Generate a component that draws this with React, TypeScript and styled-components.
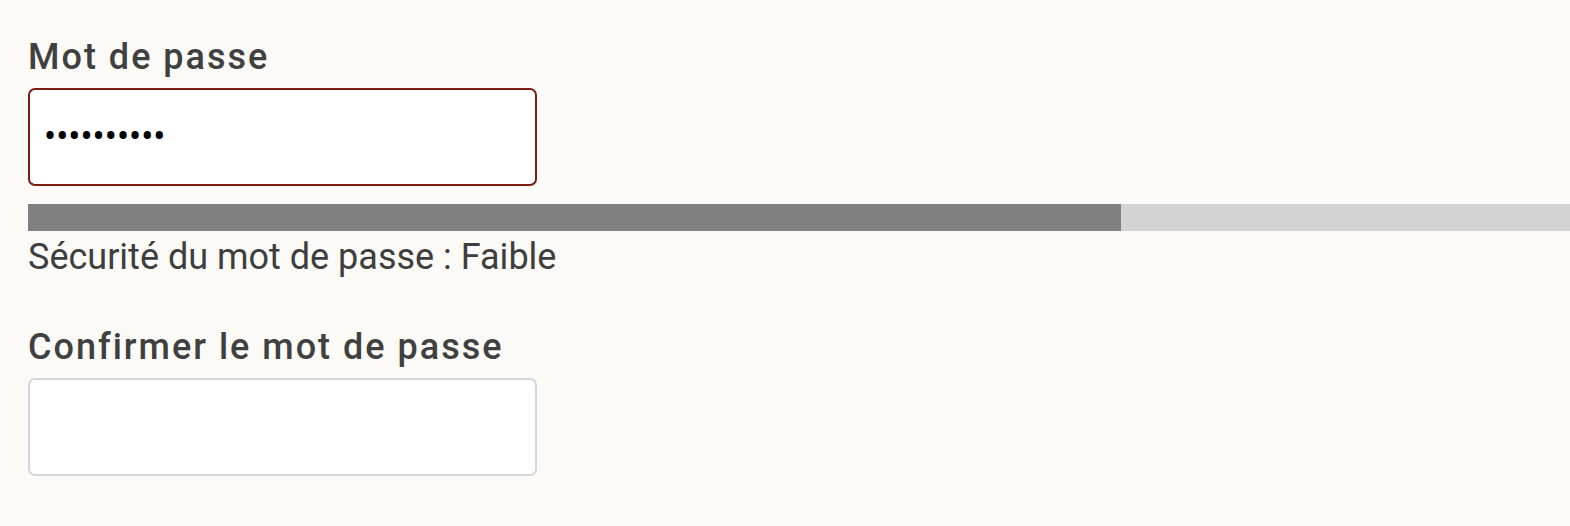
import styled, { createGlobalStyle } from 'styled-components';

const GlobalStyle = createGlobalStyle`
  html, body {
    margin: 0;
    padding: 0;
    background: #fbfaf6;
  }
  body {
    font-family: Roboto, "Liberation Sans", sans-serif;
    color: #3e3e3e;
  }
`;

const strength = 0.709;

export default function App() {
  return (
    <>
      <GlobalStyle />
      <Form>
        <Field>
          <Label htmlFor="password">Mot de passe</Label>
          <Input id="password" type="password" defaultValue="motdepasse" $invalid />
          <Meter>
            <MeterFill style={{ width: `${strength * 100}%` }} />
          </Meter>
          <Hint>Sécurité du mot de passe : Faible</Hint>
        </Field>
        <Field>
          <Label htmlFor="confirm">Confirmer le mot de passe</Label>
          <Input id="confirm" type="password" />
        </Field>
      </Form>
    </>
  );
}

const Form = styled.form`
  display: flex;
  flex-direction: column;
  gap: 47px;
  padding: 36px 0 0 28px;
`;

const Field = styled.div`
  display: flex;
  flex-direction: column;
  align-items: flex-start;
`;

const Label = styled.label`
  font-size: 36px;
  line-height: 43px;
  font-weight: 500;
  letter-spacing: 2px;
  color: #404040;
  margin-bottom: 9px;
`;

const Input = styled.input<{ $invalid?: boolean }>`
  box-sizing: border-box;
  width: 509px;
  height: 98px;
  padding: 0 14px;
  background: #fff;
  border: 2px solid ${p => (p.$invalid ? '#7c1d14' : '#d6d6d6')};
  border-radius: 7px;
  font-family: Roboto, "Liberation Sans", sans-serif;
  font-size: 36px;
  color: #000;
  outline: none;
`;

const Meter = styled.div`
  align-self: stretch;
  height: 27px;
  margin-top: 18px;
  background: #d3d3d3;
`;

const MeterFill = styled.div`
  height: 100%;
  background: #808080;
`;

const Hint = styled.p`
  margin: 5px 0 0;
  font-size: 36px;
  line-height: 43px;
  color: #3e3e3e;
`;
